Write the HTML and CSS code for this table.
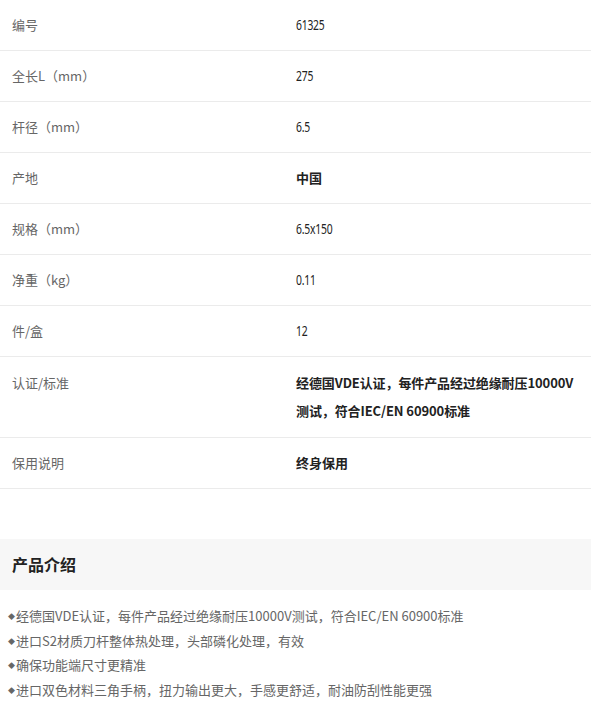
FILE: index.html
```html
<!DOCTYPE html>
<html lang="zh-CN">
<head>
<meta charset="utf-8">
<title>产品参数</title>
<link rel="stylesheet" href="styles.css">
</head>
<body>
<div class="specs">
  <div class="row"><div class="label">编号</div><div class="value"><span class="num">61325</span></div></div>
  <div class="row"><div class="label">全长L（mm）</div><div class="value"><span class="num">275</span></div></div>
  <div class="row"><div class="label">杆径（mm）</div><div class="value"><span class="num">6.5</span></div></div>
  <div class="row"><div class="label">产地</div><div class="value bold">中国</div></div>
  <div class="row"><div class="label">规格（mm）</div><div class="value"><span class="num">6.5x150</span></div></div>
  <div class="row"><div class="label">净重（kg）</div><div class="value"><span class="num">0.11</span></div></div>
  <div class="row"><div class="label">件/盒</div><div class="value"><span class="num">12</span></div></div>
  <div class="row row-tall"><div class="label">认证/标准</div><div class="value bold tight">经德国VDE认证，每件产品经过绝缘耐压10000V测试，符合IEC/EN 60900标准</div></div>
  <div class="row"><div class="label">保用说明</div><div class="value bold">终身保用</div></div>
</div>
<section class="intro">
  <h2 class="intro-title">产品介绍</h2>
  <ul class="intro-list">
    <li>经德国VDE认证，每件产品经过绝缘耐压10000V测试，符合IEC/EN 60900标准</li>
    <li>进口S2材质刀杆整体热处理，头部磷化处理，有效</li>
    <li>确保功能端尺寸更精准</li>
    <li>进口双色材料三角手柄，扭力输出更大，手感更舒适，耐油防刮性能更强</li>
  </ul>
</section>
</body>
</html>
```
FILE: styles.css
```css
* { box-sizing: border-box; }
body {
  margin: 0;
  background: #fff;
  font-family: "Noto Sans CJK SC", sans-serif;
  font-size: 13px;
  color: #333;
}
.specs { display: flex; flex-direction: column; }
.row {
  display: grid;
  grid-template-columns: 296px 282px;
  padding: 11px 0;
  border-bottom: 1px solid #ebebeb;
  line-height: 28px;
}
.row-tall { padding-top: 12px; padding-bottom: 12px; }
.label { padding-left: 12px; color: #666; }
.value { color: #222; }
.num {
  display: inline-block;
  font-family: "Noto Sans", "Noto Sans CJK SC", sans-serif;
  font-size: 14px;
  letter-spacing: -0.3px;
  transform: scaleX(0.74);
  transform-origin: left center;
}
.tight { letter-spacing: -0.1px; }
.bold { font-weight: bold; }
.intro { margin-top: 50px; }
.intro-title {
  margin: 0;
  background: #f7f7f7;
  height: 51px;
  line-height: 51px;
  padding-left: 12px;
  font-size: 16px;
  font-weight: bold;
  color: #222;
}
.intro-list {
  list-style: none;
  margin: 0;
  padding: 14px 0 0 8px;
  color: #666;
  line-height: 24.6px;
}
.intro-list li::before {
  content: "◆";
  font-size: 7px;
  vertical-align: 2px;
  margin-right: 1px;
}
```
